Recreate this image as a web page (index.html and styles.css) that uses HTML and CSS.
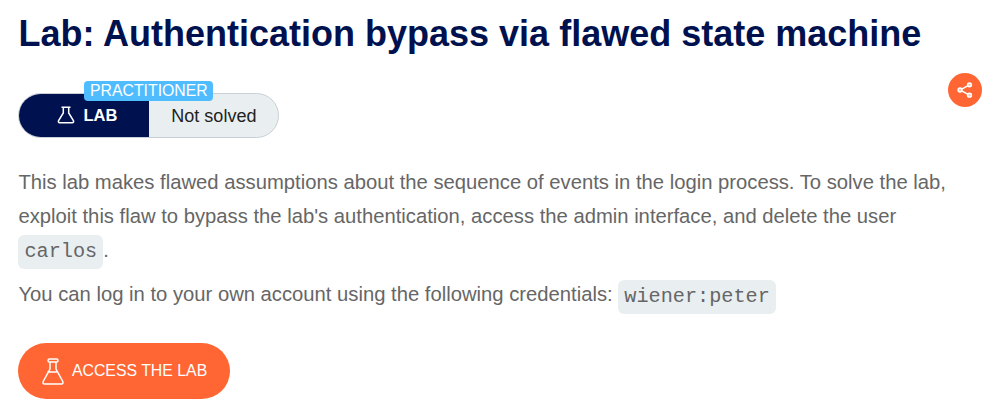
FILE: index.html
```html
<!DOCTYPE html>
<html lang="en">
<head>
<meta charset="utf-8">
<title>Lab: Authentication bypass via flawed state machine</title>
<link rel="stylesheet" href="styles.css">
</head>
<body>
<main class="page">
  <h1 class="title">Lab: Authentication bypass via flawed state machine</h1>
  <div class="status-row">
    <div class="status">
      <span class="level">PRACTITIONER</span>
      <div class="kind">
        <svg class="flask-small" viewBox="0 0 18 18"><path d="M4.500 1.300h9M6.300 1.500v5.500L1.600 14.500Q.8 16.700 2.800 16.700h12.400Q17.200 16.700 16.400 14.500L11.700 7V1.500"/></svg>
        <span>LAB</span>
      </div>
      <div class="state">Not solved</div>
    </div>
    <button class="share" aria-label="Share">
      <svg viewBox="0 0 16 16"><path d="M12.500 2.800 3 8l9.500 5.200"/><circle cx="12.500" cy="2.800" r="1.900"/><circle cx="3" cy="8" r="1.900"/><circle cx="12.500" cy="13.200" r="1.900"/></svg>
    </button>
  </div>
  <p class="text">This lab makes flawed assumptions about the sequence of events in the login process. To solve the lab,<br>exploit this flaw to bypass the lab's authentication, access the admin interface, and delete the user<br><code>carlos</code>.</p>
  <p class="text credentials">You can log in to your own account using the following credentials: <code>wiener:peter</code></p>
  <a class="access">
    <svg class="flask-large" viewBox="0 0 22 27"><path d="M7.500 1h7Q16 1 16 2.500T14.500 4h-7Q6 4 6 2.500T7.500 1ZM8 4v7L1.200 23.500Q.5 26 2.500 26h17Q21.500 26 20.800 23.500L14 11V4M5.300 14h10.400"/></svg>
    <span>ACCESS THE LAB</span>
  </a>
</main>
</body>
</html>
```
FILE: styles.css
```css
* { box-sizing: border-box; }
body { margin: 0; background: #fff; font-family: "Liberation Sans", Arial, sans-serif; }
.page { padding: 13px 13px 0 18.400px; }
.title { margin: 0; color: #00114f; font-size: 36px; line-height: 42px; white-space: nowrap; }
.status-row { display: flex; justify-content: space-between; align-items: flex-start; margin-top: 18px; }
.status { position: relative; display: flex; width: 261px; height: 45px; margin-top: 20px; border: 1px solid #c9d0d5; border-radius: 23px; background: #e9eff1; }
.level { position: absolute; left: 65px; top: -13px; width: 129px; height: 20px; border-radius: 4px; background: #4fbcff; color: #fff; font-size: 15.800px; line-height: 19px; text-align: center; }
.kind { display: flex; align-items: center; gap: 8px; width: 130px; padding-left: 38px; border-radius: 22px 0 0 22px; background: #00114f; color: #fff; font-size: 16.500px; font-weight: bold; }
.state { flex: 1; color: #222; font-size: 18px; line-height: 45px; text-align: center; }
.share { display: flex; align-items: center; justify-content: center; width: 34px; height: 34px; padding: 0; border: 0; border-radius: 50%; background: #ff6633; }
.share svg { width: 16px; height: 16px; fill: #ffc3af; stroke: #fff; stroke-width: 1.500; }
.share path { fill: none; }
.flask-small { width: 18px; height: 18px; margin-top: -2px; fill: none; stroke: #fff; stroke-width: 1.500; }
.text { margin: 27px 0 0; color: #666; font-size: 20.245px; line-height: 34px; white-space: nowrap; }
.credentials { height: 34px; margin-top: 8px; }
code { display: inline-block; height: 34px; padding: 0 6px; border-radius: 6px; background: #e9eff1; font-family: "Liberation Mono", monospace; font-size: 20.220px; line-height: 33px; }
.credentials code { vertical-align: -1px; }
.access { display: flex; align-items: center; gap: 8px; width: 212px; height: 56px; margin-top: 32px; padding-left: 23.500px; border-radius: 28px; background: #ff6633; color: #fff; font-size: 15.850px; }
.flask-large { width: 22px; height: 27px; fill: none; stroke: #fff; stroke-width: 1.500; }
```
